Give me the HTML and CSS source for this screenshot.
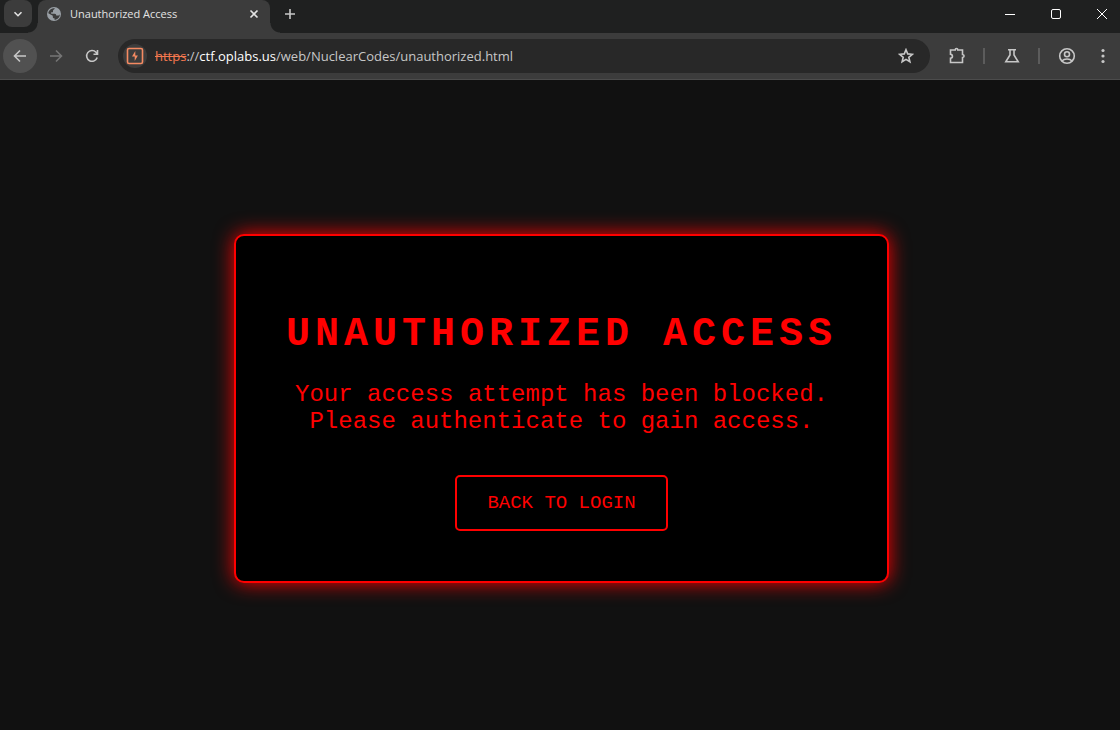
FILE: index.html
```html
<!DOCTYPE html>
<html lang="en">
<head>
<meta charset="utf-8">
<title>Unauthorized Access</title>
<link rel="stylesheet" href="styles.css">
</head>
<body>
<header class="browser">
  <div class="tab-strip">
    <button class="tab-search" aria-label="Search tabs"><svg width="10" height="10" viewBox="0 0 10 10"><path d="M1.500 3.200 5 6.700 8.500 3.200"/></svg></button>
    <div class="tab">
      <svg class="globe" width="16" height="16" viewBox="0 0 16 16"><circle cx="8" cy="8" r="7"/><path d="M8.800 2.300C8.800 3.600 7 3.400 7 4.800v1.400H5.200v1.600h3.600c1 0 1.400.8 1.400 1.800h1.600c1 0 1.800-.6 2-1.600.3 3-2.200 5.800-5.300 5.800v-1.500c-1.200 0-1.700-.6-1.700-1.600v-1L2.300 7.300C2.600 4.200 5.400 2 8.800 2.300z"/></svg>
      <span class="tab-title">Unauthorized Access</span>
      <button class="tab-close" aria-label="Close tab"><svg width="10" height="10" viewBox="0 0 10 10"><path d="m1.500 1.500 7 7m0-7-7 7"/></svg></button>
    </div>
    <button class="new-tab" aria-label="New tab"><svg width="12" height="12" viewBox="0 0 12 12"><path d="M6 1v10M1 6h10"/></svg></button>
    <div class="window-controls">
      <button aria-label="Minimize"><svg width="12" height="12" viewBox="0 0 12 12"><path d="M1 6.500h10"/></svg></button>
      <button aria-label="Maximize"><svg width="12" height="12" viewBox="0 0 12 12"><rect x="1.500" y="1.500" width="9" height="9" rx="1.500"/></svg></button>
      <button aria-label="Close"><svg width="12" height="12" viewBox="0 0 12 12"><path d="m1 1 10 10m0-10L1 11"/></svg></button>
    </div>
  </div>
  <div class="toolbar">
    <button class="nav-button back" aria-label="Back"><svg width="16" height="16" viewBox="0 0 16 16"><path d="M14 8H3m5-5.500L2.500 8 8 13.500"/></svg></button>
    <button class="nav-button forward" aria-label="Forward" disabled><svg width="16" height="16" viewBox="0 0 16 16"><path d="M2 8h11M8 2.500 13.500 8 8 13.500"/></svg></button>
    <button class="nav-button" aria-label="Reload"><svg width="16" height="16" viewBox="0 0 16 16"><path d="M13.200 9.500A5.400 5.400 0 1 1 12 4.200L13.500 6M13.500 2v4.200H9.500"/></svg></button>
    <div class="address">
      <button class="site-info" aria-label="Site information"><svg width="18" height="18" viewBox="0 0 18 18"><rect x="1.500" y="1.500" width="15" height="15" rx="1.500"/><path d="M9.300 4v4.500h2.600L8.700 14V9.500H6z"/></svg></button>
      <a class="url" href="#"><span class="scheme">https</span>://<span class="host">ctf.oplabs.us</span>/web/NuclearCodes/unauthorized.html</a>
      <button class="bookmark" aria-label="Bookmark this page"><svg width="16" height="16" viewBox="0 0 16 16"><path d="m8 1.700 1.700 4.200 4.600.4-3.500 3 1.100 4.500L8 11.400l-3.900 2.400 1.100-4.500-3.500-3 4.600-.4z"/></svg></button>
    </div>
    <div class="actions">
      <button aria-label="Extensions"><svg width="18" height="18" viewBox="0 0 18 18"><path d="M2.500 3h4.700C7.200.9 9.800.9 9.800 3h4.700v4.500c2.100.2 2.100 2.800 0 3v5h-12v-4.200c2.600-.3 2.600-3.800 0-4.100z"/></svg></button>
      <span class="divider"></span>
      <button aria-label="Labs"><svg width="16" height="16" viewBox="0 0 16 16"><path d="M4 1.800h8M6 2v5l-4.200 6.800h12.400L10 7V2"/></svg></button>
      <span class="divider"></span>
      <button aria-label="Profile"><svg width="18" height="18" viewBox="0 0 18 18"><circle cx="9" cy="9" r="7.300"/><circle cx="9" cy="7.300" r="2.500"/><path d="M3.800 14c2.700-2.600 7.700-2.600 10.400 0"/></svg></button>
      <button class="menu" aria-label="Menu"><svg width="4" height="16" viewBox="0 0 4 16"><circle cx="2" cy="2.500" r="1.600"/><circle cx="2" cy="8" r="1.600"/><circle cx="2" cy="13.500" r="1.600"/></svg></button>
    </div>
  </div>
</header>
<main class="page">
  <section class="card">
    <h1 class="heading">UNAUTHORIZED ACCESS</h1>
    <p class="message">Your access attempt has been blocked.<br>Please authenticate to gain access.</p>
    <a class="login-link" href="#">BACK TO LOGIN</a>
  </section>
</main>
</body>
</html>
```
FILE: styles.css
```css
* { box-sizing: border-box; }

body {
  display: flex;
  flex-direction: column;
  min-height: 100vh;
  margin: 0;
  background: #111;
  font-family: "Open Sans", sans-serif;
}

button {
  display: flex;
  align-items: center;
  justify-content: center;
  flex: none;
  padding: 0;
  border: 0;
  background: none;
  color: #c7c7c7;
}

svg {
  display: block;
  fill: none;
  stroke: currentColor;
  stroke-width: 1.6;
}

.tab-strip {
  display: flex;
  height: 33px;
  padding-left: 4px;
  background: #1f2020;
}

.tab-search {
  width: 28px;
  height: 27px;
  margin-right: 6px;
  border-radius: 8px;
  background: #3c3c3c;
  color: #e3e3e3;
}

.tab {
  position: relative;
  display: flex;
  align-items: center;
  width: 232px;
  padding: 0 10px 6px 8px;
  border-radius: 8px 8px 0 0;
  background: #3c3c3c;
}

.tab::before,
.tab::after {
  content: "";
  position: absolute;
  bottom: 0;
  width: 10px;
  height: 10px;
}

.tab::before {
  right: 100%;
  background: radial-gradient(circle at 0 0, transparent 9px, #3c3c3c 10px);
}

.tab::after {
  left: 100%;
  background: radial-gradient(circle at 100% 0, transparent 9px, #3c3c3c 10px);
}

.globe { stroke: none; }
.globe circle { fill: #9aa0a6; }
.globe path { fill: #3c3c3c; }

.tab-title {
  flex: 1;
  margin-left: 8px;
  color: #e3e3e3;
  font-size: 11px;
  line-height: 16px;
}

.tab-close { width: 12px; color: #e3e3e3; }

.new-tab { width: 40px; height: 27px; }

.window-controls { display: flex; margin-left: auto; }
.window-controls button { width: 46px; height: 27px; color: #fff; }
.window-controls button:last-child { width: 36px; margin-left: 5px; }
.window-controls svg { stroke-width: 1; }

.toolbar {
  display: flex;
  align-items: center;
  height: 47px;
  padding-left: 3px;
  border-bottom: 1px solid #4c4c4c;
  background: #3c3c3c;
}

.nav-button { width: 34px; height: 34px; margin-right: 2px; border-radius: 50%; }
.back { background: #515151; }
.forward { color: #757575; }

.address {
  display: flex;
  align-items: center;
  flex: 1;
  height: 34px;
  margin-left: 7px;
  padding: 0 16px 0 5px;
  border-radius: 17px;
  background: #282828;
}

.site-info {
  width: 24px;
  height: 24px;
  border-radius: 50%;
  background: #3c3c3c;
  color: #f58a62;
}

.site-info path { fill: currentColor; stroke: none; }

.url {
  flex: 1;
  margin-left: 8px;
  color: #c7c7c7;
  font-size: 13px;
  line-height: 20px;
  text-decoration: none;
  white-space: nowrap;
}

.scheme { color: #f5784f; text-decoration: line-through; }
.host { color: #fff; }

.actions { display: flex; align-items: center; margin-left: 18px; }
.actions > button { width: 18px; height: 34px; }
.divider { width: 2px; height: 16px; margin: 0 18px 0 17px; background: #5c5c5c; }
.actions > .menu { width: 18px; margin: 0 8px 0 18px; }
.menu circle { fill: currentColor; stroke: none; }

.page {
  display: flex;
  flex: 1;
  align-items: center;
  justify-content: center;
  padding: 7px 0 0 3px;
  color: #f00;
  font-family: "Courier New", "Liberation Mono", monospace;
}

.card {
  display: flex;
  flex-direction: column;
  align-items: center;
  padding: 50px;
  border: 2px solid #f00;
  border-radius: 10px;
  background: #000;
  box-shadow: 0 0 20px #f00;
  text-align: center;
}

.heading {
  margin: 25px 0 23px;
  font-size: 40px;
  line-height: 47px;
  letter-spacing: 5px;
}

.message {
  margin: 0 0 40px;
  font-size: 24px;
  line-height: 27px;
}

.login-link {
  padding: 15px 30px;
  border: 2px solid #f00;
  border-radius: 5px;
  color: #f00;
  font-size: 19px;
  line-height: 22px;
  text-decoration: none;
}
```
